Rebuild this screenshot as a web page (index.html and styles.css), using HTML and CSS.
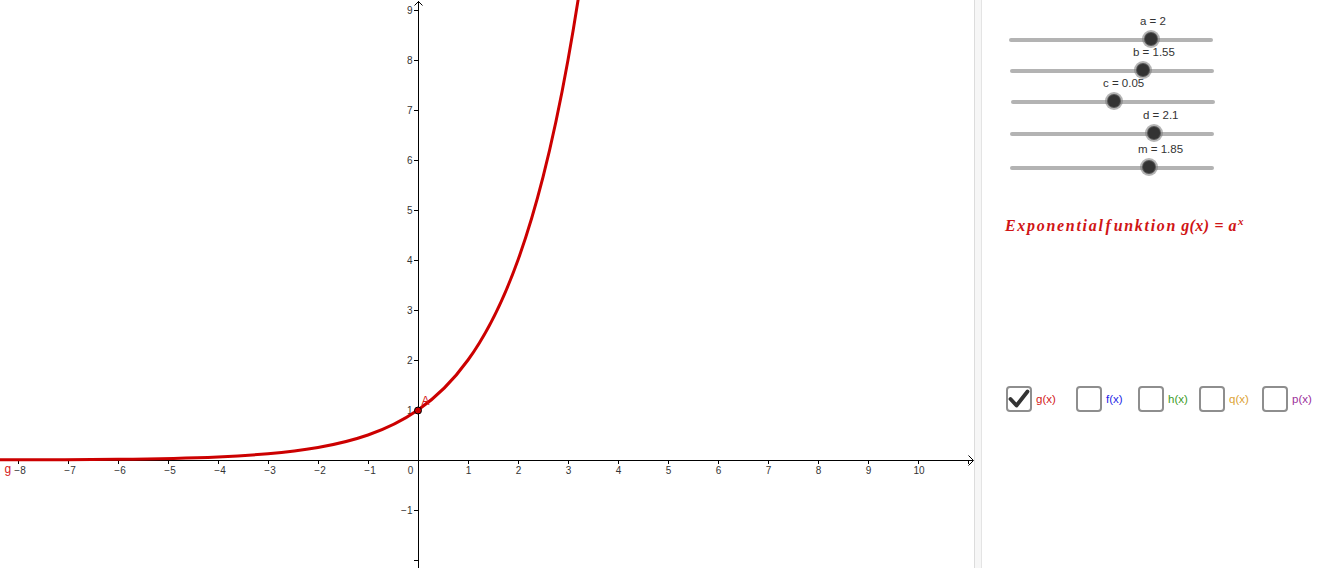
FILE: index.html
```html
<!DOCTYPE html>
<html lang="de">
<head>
<meta charset="utf-8">
<title>Exponentialfunktion</title>
<link rel="stylesheet" href="styles.css">
</head>
<body>
<div class="app">
  <div class="graphics">
    <svg class="plot" width="974" height="568" viewBox="0 0 974 568" xmlns="http://www.w3.org/2000/svg">
      <g class="axes" stroke="#000" stroke-width="1" fill="none">
        <line x1="0" y1="460.5" x2="973" y2="460.5"/>
        <polyline points="968.5,455.5 973.5,460.5 968.5,465.5"/>
        <line x1="418.5" y1="568" x2="418.5" y2="1"/>
        <polyline points="414.5,5.5 418.5,1.5 422.5,5.5"/>
        <path d="M18.5 460v4M68.5 460v4M118.5 460v4M168.5 460v4M218.5 460v4M268.5 460v4M318.5 460v4M368.5 460v4M468.5 460v4M518.5 460v4M568.5 460v4M618.5 460v4M668.5 460v4M718.5 460v4M768.5 460v4M818.5 460v4M868.5 460v4M918.5 460v4M968.5 460v4"/>
        <path d="M414 10.5h4M414 60.5h4M414 110.5h4M414 160.5h4M414 210.5h4M414 260.5h4M414 310.5h4M414 360.5h4M414 410.5h4M414 510.5h4M414 560.5h4"/>
      </g>
      <g class="xlabels" text-anchor="middle">
        <text x="20" y="474">−8</text>
        <text x="70" y="474">−7</text>
        <text x="120" y="474">−6</text>
        <text x="170" y="474">−5</text>
        <text x="220" y="474">−4</text>
        <text x="270" y="474">−3</text>
        <text x="320" y="474">−2</text>
        <text x="370" y="474">−1</text>
        <text x="410.5" y="474">0</text>
        <text x="468.5" y="474">1</text>
        <text x="518.5" y="474">2</text>
        <text x="568.5" y="474">3</text>
        <text x="618.5" y="474">4</text>
        <text x="668.5" y="474">5</text>
        <text x="718.5" y="474">6</text>
        <text x="768.5" y="474">7</text>
        <text x="818.5" y="474">8</text>
        <text x="868.5" y="474">9</text>
        <text x="919" y="474">10</text>
      </g>
      <g class="ylabels" text-anchor="end">
        <text x="412.5" y="14">9</text>
        <text x="412.5" y="64">8</text>
        <text x="412.5" y="114">7</text>
        <text x="412.5" y="164">6</text>
        <text x="412.5" y="214">5</text>
        <text x="412.5" y="264">4</text>
        <text x="412.5" y="314">3</text>
        <text x="412.5" y="364">2</text>
        <text x="412.5" y="414">1</text>
        <text x="412.5" y="514">−1</text>
      </g>
      <path class="curve" d="M0 459.85 C39.33 459.77 78.67 459.65 118 459.22 C151.33 458.86 184.67 458.32 218 456.88 C234.67 456.15 251.33 455.19 268 453.75 C284.67 452.31 301.33 450.39 318 447.5 C334.67 444.61 351.33 440.78 368 435 C384.67 429.22 401.33 421.55 418 410 C434.67 398.45 451.33 383.1 468 360 C484.67 336.9 501.33 306.21 518 260 C526.33 236.9 534.67 209.84 543 177.16 C551.33 144.49 559.67 106.21 568 60 C572.17 36.9 576.33 11.8 580.5 -15.68"/>
      <circle cx="418" cy="410.5" r="3.5" fill="#cc0000" stroke="#000" stroke-width="1"/>
      <text class="lbl-red" x="421.5" y="405">A</text>
      <text class="lbl-red" x="4.5" y="473">g</text>
    </svg>
  </div>
  <div class="divider"></div>
  <div class="panel">
    <div class="sliders">
      <div class="slider slider-a">
        <div class="slider-label">a = 2</div>
        <div class="track"><span class="knob" style="left:142px"></span></div>
      </div>
      <div class="slider slider-b">
        <div class="slider-label">b = 1.55</div>
        <div class="track"><span class="knob" style="left:133px"></span></div>
      </div>
      <div class="slider slider-c">
        <div class="slider-label">c = 0.05</div>
        <div class="track"><span class="knob" style="left:103px"></span></div>
      </div>
      <div class="slider slider-d">
        <div class="slider-label">d = 2.1</div>
        <div class="track"><span class="knob" style="left:144px"></span></div>
      </div>
      <div class="slider slider-m">
        <div class="slider-label">m = 1.85</div>
        <div class="track"><span class="knob" style="left:139px"></span></div>
      </div>
    </div>
    <div class="formula"><span class="word">Exponential<span class="f">f</span>unktion</span> <span class="fn">g(x)</span><span class="eq">=</span><span class="base">a</span><sup>x</sup></div>
    <div class="checks">
      <label class="check check-g">
        <span class="box">
          <svg width="22" height="22" viewBox="0 0 22 22"><path d="M2.5 11 L8.5 17.5 L19.5 3.5" fill="none" stroke="#333" stroke-width="3.8" stroke-linecap="round" stroke-linejoin="round"/></svg>
        </span>
        <span class="check-text">g(x)</span>
      </label>
      <label class="check check-f"><span class="box"></span><span class="check-text">f(x)</span></label>
      <label class="check check-h"><span class="box"></span><span class="check-text">h(x)</span></label>
      <label class="check check-q"><span class="box"></span><span class="check-text">q(x)</span></label>
      <label class="check check-p"><span class="box"></span><span class="check-text">p(x)</span></label>
    </div>
  </div>
</div>
</body>
</html>
```

FILE: styles.css
```css
html, body {
  margin: 0;
  padding: 0;
  background: #fff;
}
body {
  font-family: "Liberation Sans", Arial, sans-serif;
  width: 1336px;
  height: 568px;
  overflow: hidden;
}
.app {
  display: flex;
  width: 1336px;
  height: 568px;
}
.graphics {
  width: 974px;
  height: 568px;
  flex: none;
  background: #fff;
}
.plot {
  display: block;
}
.plot text {
  font-family: "Liberation Sans", Arial, sans-serif;
  font-size: 10px;
  fill: #333;
}
.plot .lbl-red {
  font-size: 12px;
  fill: #d51b1b;
}
.curve {
  fill: none;
  stroke: #cc0000;
  stroke-width: 3;
  stroke-linejoin: round;
}
.divider {
  width: 6px;
  flex: none;
  background: #f6f6f6;
  border-left: 1px solid #dcdcdc;
  border-right: 1px solid #e4e4e4;
}
.panel {
  flex: 1;
  display: flex;
  flex-direction: column;
  background: #fff;
}
.sliders {
  padding-top: 14px;
  display: flex;
  flex-direction: column;
}
.slider {
  height: 31px;
}
.slider-c { height: 32px; }
.slider-d { height: 34px; }
.slider-m { height: 28px; }
.slider-label {
  font-size: 11.5px;
  line-height: 14px;
  height: 14px;
  color: #333;
  white-space: nowrap;
}
.slider-a .slider-label { margin-left: 158px; }
.slider-b .slider-label { margin-left: 151px; }
.slider-c .slider-label { margin-left: 121px; }
.slider-d .slider-label { margin-left: 161px; }
.slider-m .slider-label { margin-left: 156px; }
.track {
  position: relative;
  margin-top: 10px;
  height: 4px;
  width: 204px;
  border-radius: 2px;
  background: #b3b3b3;
  margin-left: 28px;
}
.slider-a .track { margin-left: 27px; }
.slider-c .track { margin-left: 29px; }
.knob {
  position: absolute;
  top: -5px;
  width: 12px;
  height: 12px;
  margin-left: -6px;
  border-radius: 50%;
  background: #333;
  box-shadow: 0 0 0 1px #555, 0 0 0 3px rgba(120, 120, 120, 0.55);
}
.formula {
  margin-top: 46px;
  margin-left: 23px;
  font-family: "Liberation Serif", "Times New Roman", serif;
  font-style: italic;
  font-weight: bold;
  font-size: 16px;
  line-height: 20px;
  height: 20px;
  color: #d01515;
  white-space: nowrap;
}
.formula .word {
  letter-spacing: 1.7px;
}
.formula .f {
  margin: 0 1px 0 1px;
}
.formula .fn {
  letter-spacing: 0.4px;
}
.formula .eq {
  font-style: normal;
  margin: 0 5px 0 5px;
}
.formula .base {
  letter-spacing: 0.5px;
}
.formula sup {
  font-size: 11px;
  line-height: 0;
  vertical-align: 6px;
  margin-left: 1px;
}
.checks {
  margin-top: 150px;
  margin-left: 24px;
  display: grid;
  grid-template-columns: 70px 62px 61px 63px auto;
  align-items: center;
}
.check {
  display: flex;
  align-items: center;
  gap: 4px;
}
.box {
  box-sizing: border-box;
  width: 26px;
  height: 26px;
  border: 2px solid #8e8e8e;
  border-radius: 4px;
  background: #fff;
  display: flex;
  align-items: center;
  justify-content: center;
}
.box svg {
  display: block;
}
.check-text {
  font-size: 11.5px;
  line-height: 14px;
}
.check-g .check-text { color: #d32020; }
.check-f .check-text { color: #1f1fe6; }
.check-h .check-text { color: #3d9a1f; }
.check-q .check-text { color: #dca232; }
.check-p .check-text { color: #9b2f9b; }
```
